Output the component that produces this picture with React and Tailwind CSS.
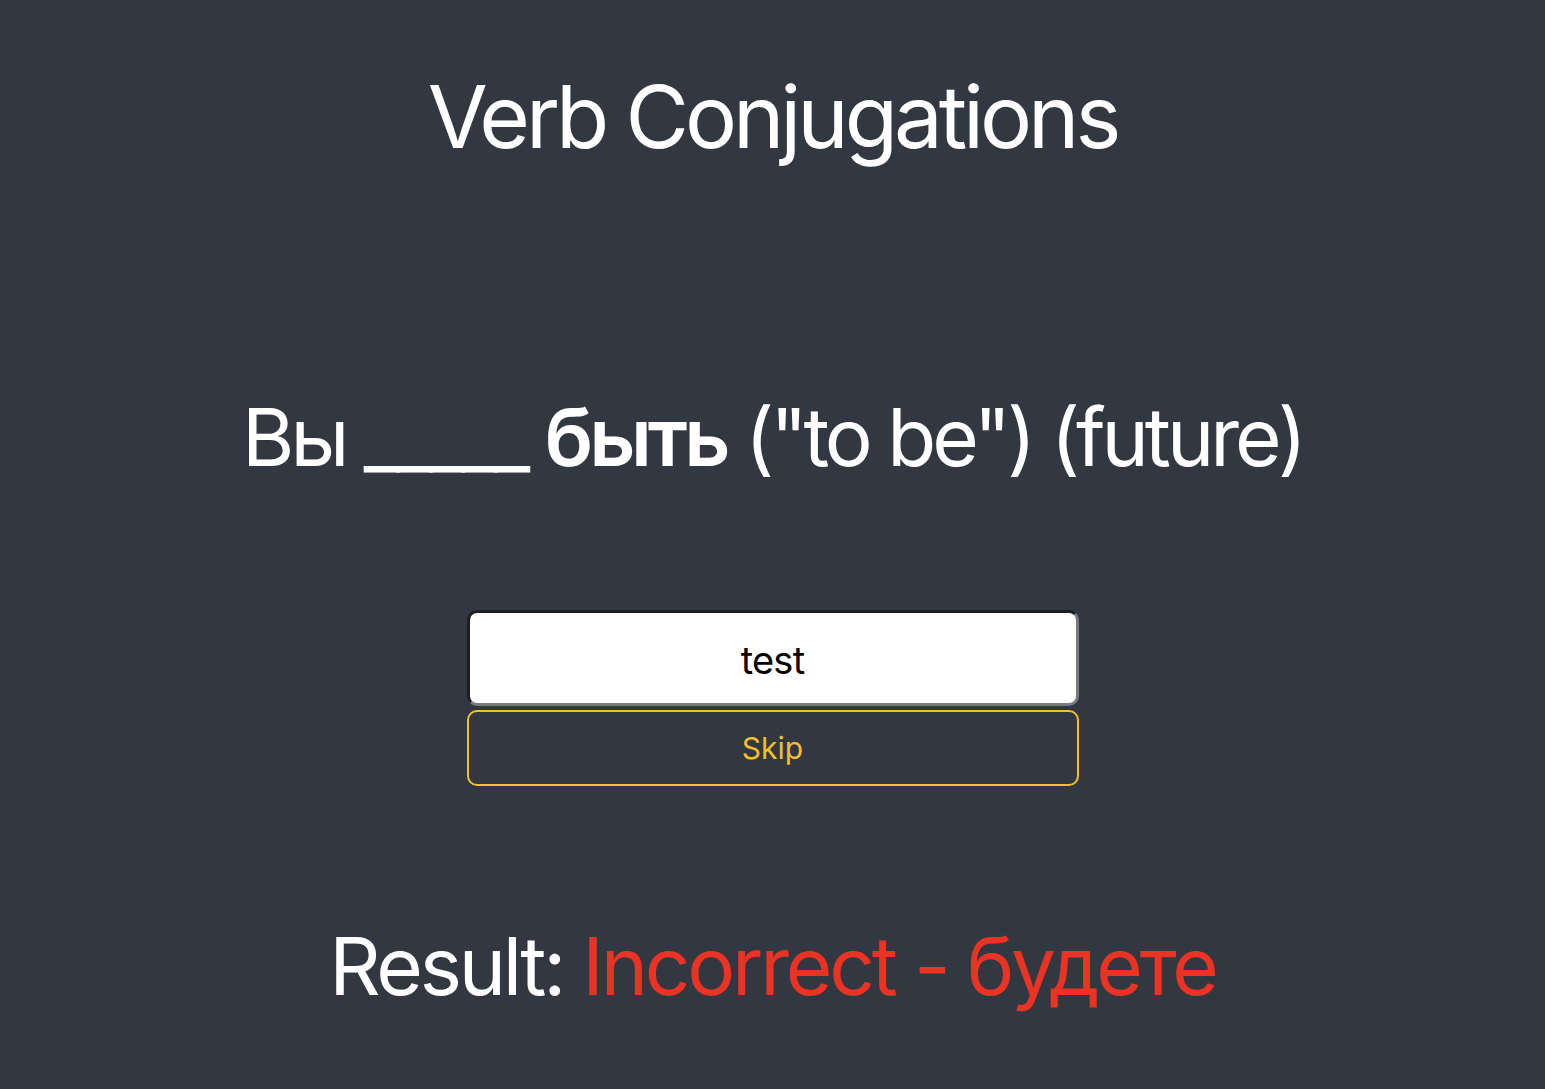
import React from 'react';

export default function App() {
  return (
    <div
      className="min-h-screen w-full bg-[#313842] flex flex-col items-center text-white"
      style={{ fontFamily: 'Inter, "Noto Sans", sans-serif' }}
    >
      {/* Header */}
      <h1 className="mt-[62px] text-[87px] leading-[110px] tracking-[-0.047em] font-normal">Verb Conjugations</h1>

      {/* Prompt */}
      <div className="mt-[215px] text-[80px] leading-[100px] tracking-[-0.05em]">
        Вы _____ <span className="font-semibold">быть</span> ("to be") (future)
      </div>

      {/* Answer + skip */}
      <div className="mt-[123px] w-[612px] flex flex-col gap-[4px]">
        <input
          defaultValue="test"
          className="h-[96px] w-full rounded-[10px] bg-white text-black text-center text-[38px] tracking-[-0.02em] pt-[4px] border-[3px] border-t-[#1f1f1f] border-l-[#1f1f1f] border-b-[#7a7a7a] border-r-[#7a7a7a] outline-none"
        />
        <button className="h-[76px] w-full rounded-[10px] border-2 border-[#f4bf2e] text-[#f4bf2e] text-[30px]">
          Skip
        </button>
      </div>

      {/* Result */}
      <div className="mt-[130px] text-[80px] leading-[100px] tracking-[-0.04em]">
        Result: <span className="text-[#ea3323]">Incorrect - будете</span>
      </div>
    </div>
  );
}
